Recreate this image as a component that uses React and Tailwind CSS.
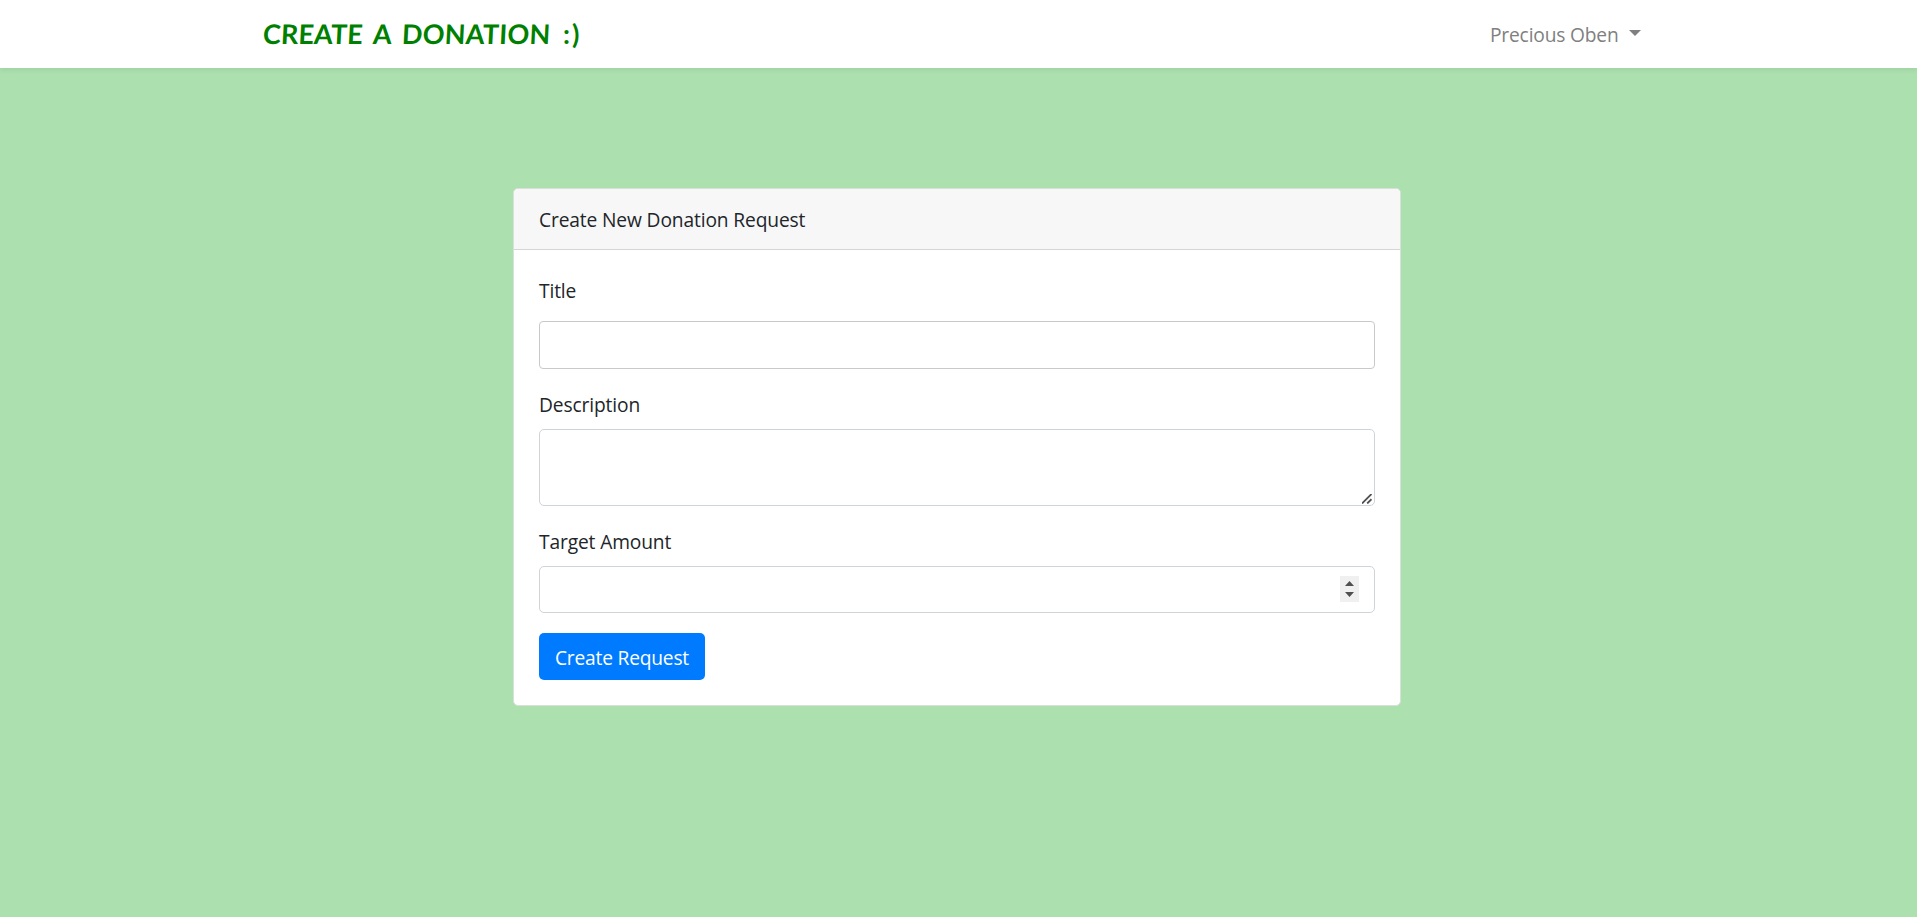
function Brand() {
  return (
    <a
      href="#"
      className="flex font-['Comic_Sans_MS','Lato',sans-serif] text-[27px] leading-8 font-bold text-[#008000]"
    >
      <span className="w-[110px] -skew-x-3 tracking-[0.1px]">CREATE</span>
      <span className="w-[29px] -skew-x-3">A</span>
      <span className="w-[161px] -skew-x-3 tracking-[0.2px]">DONATION</span>
      <span className="tracking-[2px]">:)</span>
    </a>
  );
}

function Navbar() {
  return (
    <nav className="relative flex h-[68px] items-center justify-between bg-white pr-[276px] pl-[263px] shadow-[0_2px_5px_rgba(0,0,0,0.08)]">
      <Brand />
      <button className="flex items-center leading-[30px] text-[#808080]">
        <span className="w-[139px] pt-px text-left tracking-[-0.18px] whitespace-nowrap">Precious Oben</span>
        <svg className="-mt-0.5" width="12" height="6" viewBox="0 0 12 6">
          <path d="M0 0h12L6 6z" fill="#808080" />
        </svg>
      </button>
    </nav>
  );
}

export default function App() {
  return (
    <div className="min-h-screen bg-[#ace1af] font-['Segoe_UI','Open_Sans',sans-serif] text-[19.2px] leading-[30px] tracking-[-0.13px] text-[#212529]">
      <Navbar />
      <main className="pt-[120px] pl-[513px]">
        <section className="flex h-[518px] w-[888px] flex-col rounded-[5px] border border-[#d9dfd9] bg-white">
          <header className="flex h-[61px] items-center rounded-t-[4px] border-b border-[#d5d5d5] bg-[#f7f7f7] px-[25px]">
            <h1 className="pt-0.5">Create New Donation Request</h1>
          </header>
          <form className="flex flex-col items-start px-[25px] pt-[25px]">
            <label className="h-[46px] pt-px" htmlFor="title">Title</label>
            <input id="title" className="h-12 w-[836px] rounded-[4px] border border-[#c9c9c9] px-4 outline-none" />
            <label className="mt-5 h-10 pt-px" htmlFor="description">Description</label>
            <div className="relative h-[77px] w-[836px]">
              <textarea
                id="description"
                className="block h-full w-full resize-none rounded-[5px] border border-[#ced4da] px-4 py-2 outline-none"
              />
              <svg className="absolute right-[3px] bottom-[2px]" width="10" height="10" viewBox="0 0 10 10" stroke="#505050" strokeWidth="1.8">
                <path d="M0 9.5 9.5 0M5.2 9.5 9.5 5.2" />
              </svg>
            </div>
            <label className="mt-5 h-10 pt-px" htmlFor="amount">Target Amount</label>
            <div className="relative h-[47px] w-[836px]">
              <input id="amount" inputMode="numeric" className="block h-full w-full rounded-[5px] border border-[#ced4da] px-4 outline-none" />
              <svg className="absolute top-[10px] right-[16px]" width="19" height="26" viewBox="0 0 19 26">
                <path d="M0 0h19v26H0z" fill="#f0f0f0" />
                <path d="M5 10 9.5 5l4.5 5zM5 16l4.5 5 4.5-5z" fill="#505050" />
              </svg>
            </div>
            <button type="button" className="mt-5 h-[47px] w-[166px] rounded-[5px] bg-[#007bff] pt-[3px] tracking-[-0.2px] text-white">
              Create Request
            </button>
          </form>
        </section>
      </main>
    </div>
  );
}
